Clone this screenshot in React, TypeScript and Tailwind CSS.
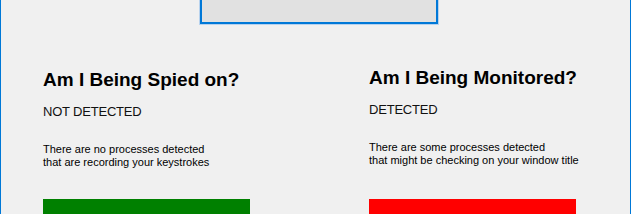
export default function App() {
  return (
    <div
      className="w-[631px] h-[214px] overflow-hidden bg-[#f0f0f0] border-x border-[#0078d7]"
      style={{ fontFamily: '"Liberation Sans", Arial, sans-serif' }}
    >
      {/* top button, cut off by the window edge */}
      <div className="flex pl-[198px]">
        <div className="w-[240px] h-[25px] border-x border-b border-[#b7d2ee]">
          <div className="h-[24px] bg-[#e1e1e1] border-x-2 border-b-2 border-[#0078d7]" />
        </div>
      </div>

      <div className="flex pl-[42px] pt-[43.5px]">
        <StatusPanel
          title="Am I Being Spied on?"
          status="NOT DETECTED"
          lines={["There are no processes detected", "that are recording your keystrokes"]}
          barClass="bg-[#008000]"
          shift=""
        />
        <StatusPanel
          title="Am I Being Monitored?"
          status="DETECTED"
          lines={["There are some processes detected", "that might be checking on your window title"]}
          barClass="bg-[#ff0000]"
          shift="-mt-[2px]"
        />
      </div>
    </div>
  );
}

interface PanelProps {
  title: string;
  status: string;
  lines: string[];
  barClass: string;
  shift: string;
}

function StatusPanel({ title, status, lines, barClass, shift }: PanelProps) {
  return (
    <div className="w-[326px] shrink-0 flex flex-col">
      <div className={shift}>
        <h2 className="text-[19px] leading-[21px] font-bold text-black whitespace-nowrap">{title}</h2>
        <p className="mt-[14.5px] text-[13px] leading-[16px] tracking-[-0.2px] text-[#111]">{status}</p>
        <div className="mt-[23px] text-[11px] leading-[13px] text-black whitespace-nowrap">
          {lines.map((l) => (
            <div key={l}>{l}</div>
          ))}
        </div>
      </div>
      <div className={`${shift === "" ? "mt-[30px]" : "mt-[32px]"} w-[207px] h-[20px] ${barClass}`} />
    </div>
  );
}
